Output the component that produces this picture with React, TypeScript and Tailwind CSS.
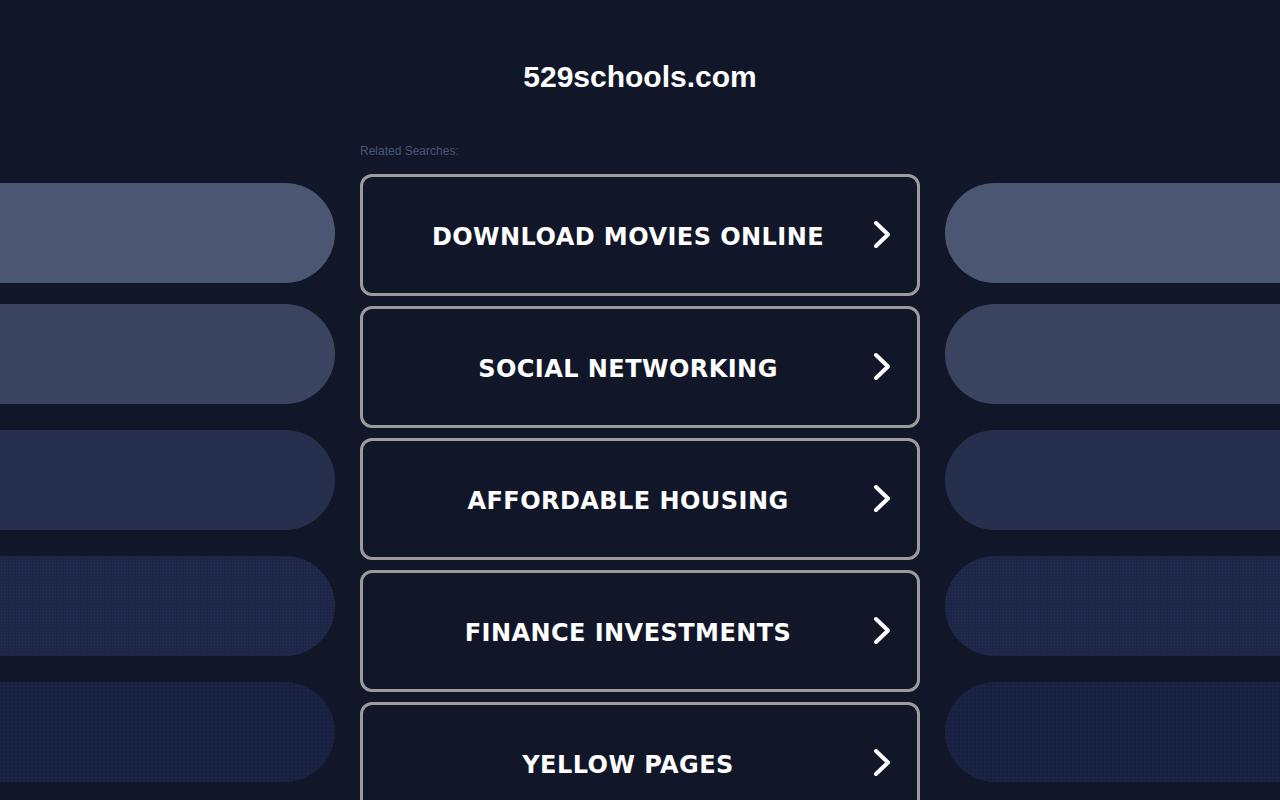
import React from "react";

const items = [
  "DOWNLOAD MOVIES ONLINE",
  "SOCIAL NETWORKING",
  "AFFORDABLE HOUSING",
  "FINANCE INVESTMENTS",
  "YELLOW PAGES",
];

const pills = [
  { cls: "mt-[183px] bg-[#4b5672]" },
  { cls: "mt-[21px] bg-[#3a4360]" },
  { cls: "mt-[26px] bg-[#272f4e]" },
  { cls: "mt-[26px] bg-[#1d2647] bg-[radial-gradient(#27305a_0.6px,transparent_0.8px)] bg-[length:3px_3px]" },
  { cls: "mt-[26px] bg-[#1b2344] bg-[radial-gradient(#111a36_0.6px,transparent_0.8px)] bg-[length:4px_4px]" },
];

function Chevron() {
  return (
    <svg width="20" height="30" viewBox="0 0 20 30" className="shrink-0">
      <polyline
        points="4,3 16,14.5 4,26"
        fill="none"
        stroke="#ffffff"
        strokeWidth="4"
        strokeLinecap="round"
        strokeLinejoin="round"
      />
    </svg>
  );
}

export default function App() {
  return (
    <div className="w-[1280px] h-[800px] overflow-hidden bg-[#111729]">
      <div className="grid grid-cols-[335px_560px_335px] gap-x-[25px]">
        <div className="flex flex-col">
          {pills.map((p, i) => (
            <div key={i} className={`h-[100px] rounded-r-[50px] ${p.cls}`} />
          ))}
        </div>
        <div className="flex flex-col">
          <h1
            className="pt-[60px] text-center text-[30px] leading-[34px] font-bold text-white"
            style={{ fontFamily: '"Liberation Sans", Arial, sans-serif' }}
          >
            529schools.com
          </h1>
          <div
            className="mt-[50px] text-[12px] leading-[14px] text-[#4a5574]"
            style={{ fontFamily: '"Liberation Sans", Arial, sans-serif' }}
          >
            Related Searches:
          </div>
          <div className="mt-[16px] flex flex-col gap-[10px]">
            {items.map((t) => (
              <a
                key={t}
                href="#"
                className="flex h-[122px] items-center rounded-[12px] border-[3px] border-[#9b9b9b] bg-[#111729] pl-[40px] pr-[25px]"
              >
                <span
                  className="flex-1 pt-[3px] text-center text-[24px] font-bold tracking-[0.45px] text-white"
                  style={{ fontFamily: '"DejaVu Sans", Verdana, sans-serif' }}
                >
                  {t}
                </span>
                <span className="ml-[19px]">
                  <Chevron />
                </span>
              </a>
            ))}
          </div>
        </div>
        <div className="flex flex-col">
          {pills.map((p, i) => (
            <div key={i} className={`h-[100px] rounded-l-[50px] ${p.cls}`} />
          ))}
        </div>
      </div>
    </div>
  );
}
